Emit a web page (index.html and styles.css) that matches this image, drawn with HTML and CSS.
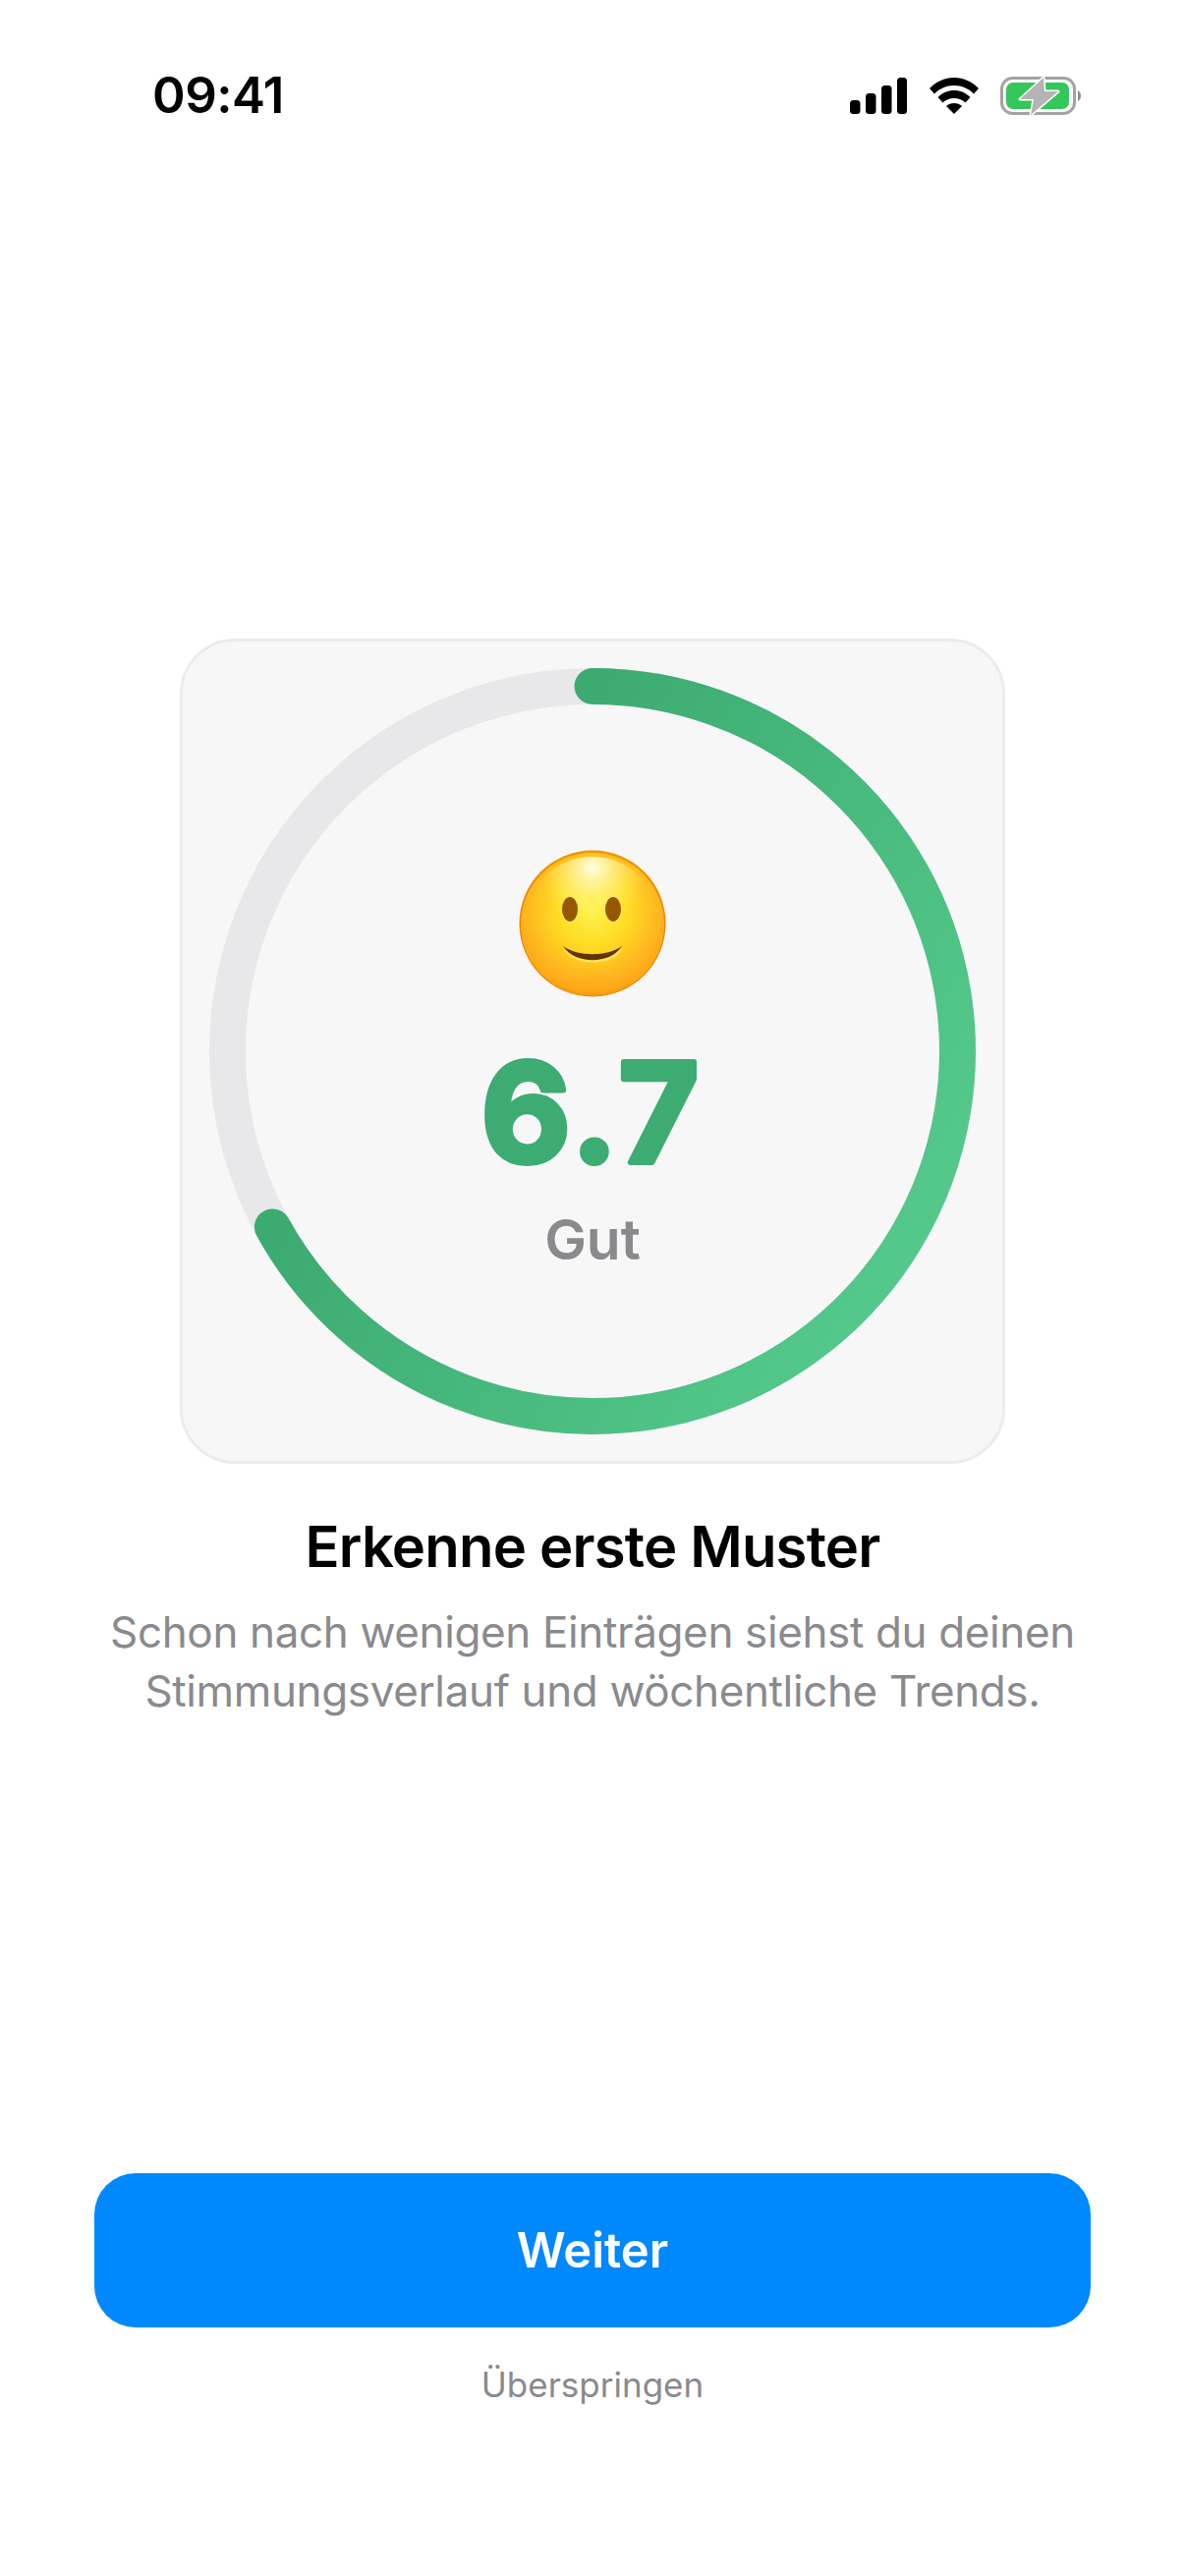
FILE: index.html
```html
<!DOCTYPE html>
<html lang="de">
<head>
    <meta charset="UTF-8">
    <meta name="viewport" content="width=device-width, initial-scale=1.0">
    <title>Erkenne erste Muster</title>
    <link rel="stylesheet" href="styles.css">
</head>
<body>

    <div class="screen">
        <!-- Status bar -->
        <div class="status-bar">
            <span class="time">09:41</span>
            <div class="status-icons">
                <svg class="icon-signal" width="58" height="37" viewBox="0 0 58 37">
                    <rect x="0" y="23" width="10.500" height="14" rx="3.500"/>
                    <rect x="16" y="16" width="10.500" height="21" rx="3.500"/>
                    <rect x="32" y="8" width="10.500" height="29" rx="3.500"/>
                    <rect x="48" y="0" width="10" height="37" rx="3.500"/>
                </svg>
                <svg class="icon-wifi" width="50" height="37" viewBox="0 0 50 37">
                    <path d="M25 0C15 0 7 4 0 11L5 16.500C10.500 11 17 8 25 8C33 8 39.500 11 45 16.500L50 11C43 4 35 0 25 0Z"/>
                    <path d="M8.500 20C13 15.500 19 13 25 13C31 13 37 15.500 41.500 20L36.500 25.500C33.500 22.500 29.500 21 25 21C20.500 21 16.500 22.500 13.500 25.500Z"/>
                    <path d="M17 29C19 27 22 26 25 26C28 26 31 27 33 29L25 37Z"/>
                </svg>
                <svg class="icon-battery" width="82" height="40" viewBox="0 0 82 40">
                    <rect x="1.500" y="1.500" width="74" height="36" rx="11" fill="none" stroke="#a3a3a3" stroke-width="3"/>
                    <rect x="6" y="6" width="64" height="27" rx="7" fill="#34c759"/>
                    <path d="M79 14C81 15 82 17 82 19.500C82 22 81 24 79 25Z" fill="#8e8e8e"/>
                    <polygon points="44,1 20,23 34,23 31,39 59,15 45,15" fill="#b4b4b4" stroke="#fff" stroke-width="3" stroke-linejoin="round" paint-order="stroke"/>
                </svg>
            </div>
        </div>

        <!-- Mood card -->
        <div class="card">
            <svg class="ring" width="834" height="834" viewBox="0 0 834 834">
                <defs>
                    <linearGradient id="ringGradient" gradientUnits="userSpaceOnUse" x1="97" y1="231" x2="737" y2="601">
                        <stop offset="0.25" stop-color="#3cab71"/>
                        <stop offset="1" stop-color="#54c88b"/>
                    </linearGradient>
                </defs>
                <circle cx="417" cy="417" r="371.500" fill="none" stroke="#e8e8ea" stroke-width="37"/>
                <path d="M417 45.500A371.500 371.500 0 1 1 91.400 595.900" fill="none" stroke="url(#ringGradient)" stroke-width="37" stroke-linecap="round"/>
            </svg>

            <div class="card-content">
                <svg class="emoji" width="150" height="150" viewBox="0 0 150 150">
                    <defs>
                        <radialGradient id="faceGradient" cx="50%" cy="40%" r="62%">
                            <stop offset="0" stop-color="#fff14a"/>
                            <stop offset="0.4" stop-color="#ffdc24"/>
                            <stop offset="0.78" stop-color="#ffb31e"/>
                            <stop offset="0.92" stop-color="#fba714"/>
                            <stop offset="1" stop-color="#ea8a04"/>
                        </radialGradient>
                        <radialGradient id="faceShine" cx="50%" cy="8%" r="42%">
                            <stop offset="0" stop-color="#fffde4"/>
                            <stop offset="1" stop-color="#fff45a" stop-opacity="0"/>
                        </radialGradient>
                        <linearGradient id="faceRim" x1="0" y1="0" x2="0" y2="1">
                            <stop offset="0" stop-color="#f59300"/>
                            <stop offset="1" stop-color="#e07a08"/>
                        </linearGradient>
                    </defs>
                    <circle cx="75" cy="75" r="74.500" fill="url(#faceRim)"/>
                    <circle cx="75" cy="76" r="73" fill="url(#faceGradient)"/>
                    <circle cx="75" cy="75" r="68" fill="url(#faceShine)"/>
                    <ellipse cx="52" cy="61.500" rx="8.500" ry="13" fill="#ffec4a"/>
                    <ellipse cx="96" cy="61.500" rx="8.500" ry="13" fill="#ffec4a"/>
                    <ellipse cx="52" cy="60.500" rx="8" ry="12.500" fill="#955700"/>
                    <ellipse cx="96" cy="60.500" rx="8" ry="12.500" fill="#955700"/>
                    <path d="M45 98C60 111 90 111 105 98C100 118 52 118 45 98Z" fill="#ffe25a" transform="translate(0 1.500)"/>
                    <path d="M45 98C60 109 90 109 105 98C93 117 57 117 45 98Z" fill="#5f3500"/>
                </svg>

                <svg class="score" width="300" height="190" viewBox="0 0 300 190">
                    <text x="150" y="147" text-anchor="middle">6.7</text>
                </svg>

                <span class="score-label">Gut</span>
            </div>
        </div>

        <!-- Text -->
        <h1 class="title">Erkenne erste Muster</h1>
        <p class="subtitle">Schon nach wenigen Einträgen siehst du deinen<br>Stimmungsverlauf und wöchentliche Trends.</p>

        <!-- Actions -->
        <button class="btn">Weiter</button>
        <a class="skip">Überspringen</a>
    </div>

</body>
</html>
```

FILE: styles.css
```css
* {
    box-sizing: border-box;
}
body {
    font-family: Inter, "Liberation Sans", sans-serif;
    margin: 0;
    background-color: white;
}
.screen {
    width: 1206px;
    height: 2622px;
    display: flex;
    flex-direction: column;
    align-items: center;
    overflow: hidden;
}
.status-bar {
    width: 100%;
    height: 650px;
    padding: 67px 106px 0 155px;
    display: flex;
    justify-content: space-between;
    align-items: flex-start;
}
.time {
    font-size: 51px;
    font-weight: 600;
    line-height: 60px;
    letter-spacing: -0.5px;
    color: black;
}
.status-icons {
    display: flex;
    align-items: flex-start;
    margin-top: 11px;
}
.icon-signal {
    margin-top: 1px;
    margin-right: 23px;
}
.icon-wifi {
    margin-top: 1px;
    margin-right: 22px;
}
.card {
    position: relative;
    flex: none;
    width: 840px;
    height: 840px;
    background-color: #f7f7f7;
    border: 3px solid #ececed;
    border-radius: 56px;
}
.ring {
    position: absolute;
    top: 0;
    left: 0;
}
.card-content {
    position: relative;
    display: flex;
    flex-direction: column;
    align-items: center;
    padding-top: 212px;
}
.emoji {
    display: block;
}
.score {
    display: block;
    margin-top: 21px;
}
.score text {
    font-family: Inter, sans-serif;
    font-size: 140px;
    font-weight: 700;
    letter-spacing: 5px;
    fill: #3dac72;
    stroke: #3dac72;
    stroke-width: 6px;
    stroke-linejoin: round;
}
.score-label {
    margin-top: 2px;
    font-size: 57px;
    font-weight: 600;
    line-height: 68px;
    color: #8a8a8e;
}
.title {
    margin: 49px 0 0;
    font-size: 58px;
    font-weight: 600;
    line-height: 70px;
    letter-spacing: -0.8px;
    color: black;
}
.subtitle {
    margin: 22px 0 0;
    font-size: 44px;
    font-weight: 400;
    line-height: 60px;
    letter-spacing: -0.37px;
    text-align: center;
    color: #8a8a8e;
}
.btn {
    flex: none;
    width: 1014px;
    height: 157px;
    margin-top: 461px;
    background-color: #0088ff;
    color: white;
    border: none;
    border-radius: 42px;
    font-family: inherit;
    font-size: 49px;
    font-weight: 600;
}
.skip {
    margin-top: 36px;
    font-size: 35px;
    line-height: 44px;
    color: #8a8a8e;
}
```
